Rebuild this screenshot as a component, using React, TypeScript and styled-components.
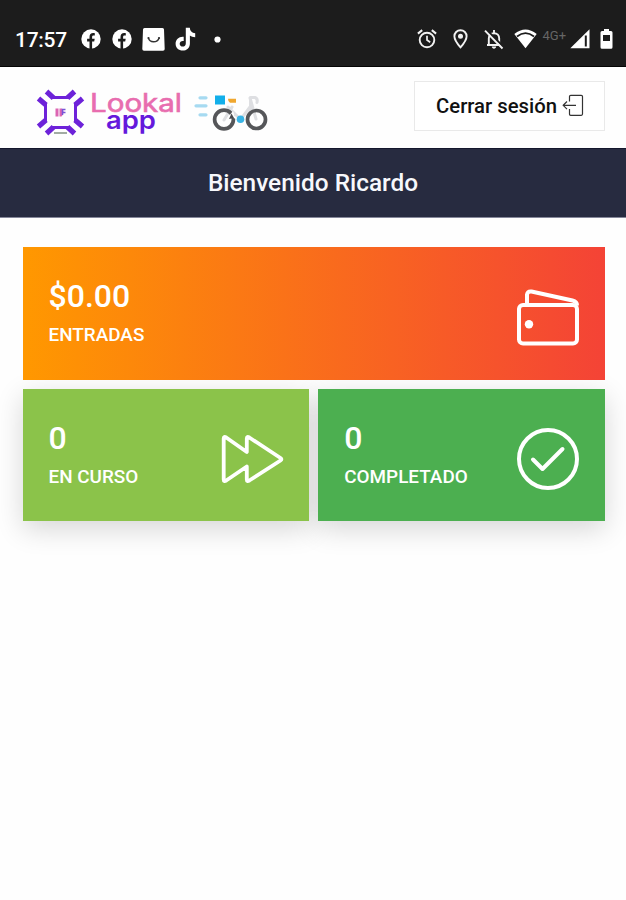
import React from "react";
import styled, { createGlobalStyle } from "styled-components";

const GlobalStyle = createGlobalStyle`
  * { box-sizing: border-box; }
  html, body { margin: 0; background: #fefefe; }
  body { font-family: Roboto, "Liberation Sans", sans-serif; overflow: hidden; }
  svg { display: block; flex: none; }
`;

const Screen = styled.div`
  width: 626px;
  height: 900px;
  background: #fefefe;
  display: flex;
  flex-direction: column;
`;

const StatusBar = styled.div`
  height: 67px;
  flex: none;
  padding: 12px 13.5px 0 15px;
  background: #1c1c1c;
  border-bottom: 1px solid #050505;
  display: flex;
  align-items: center;
  justify-content: space-between;
  color: #fff;
`;

const StatusGroup = styled.div<{ $gap: number }>`
  display: flex;
  align-items: center;
  gap: ${(p) => p.$gap}px;
  height: 24px;
`;

const Clock = styled.span`
  width: 54px;
  font-size: 21px;
  line-height: 24px;
  font-weight: 500;
  letter-spacing: -0.3px;
  padding-top: 2px;
`;

const Network = styled.span`
  width: 25px;
  font-size: 13px;
  line-height: 14px;
  color: #656565;
  margin: -7px -8px 0 -4.5px;
  white-space: nowrap;
`;

const Header = styled.header`
  height: 81px;
  flex: none;
  padding: 14px 21px 0 30px;
  display: flex;
  justify-content: space-between;
  align-items: flex-start;
`;

const LogoutButton = styled.button`
  width: 191px;
  height: 50px;
  padding: 0 0 1px 21px;
  border: 1.5px solid #e9e9e9;
  background: #fff;
  color: #111;
  font: 500 20.3px/24px Roboto, sans-serif;
  display: flex;
  align-items: center;
  gap: 5px;
  white-space: nowrap;
`;

const LogoutLabel = styled.span`
  width: 121px;
  padding-top: 1px;
`;

const Welcome = styled.h1`
  height: 70px;
  flex: none;
  margin: 0;
  background: #272b40;
  border-top: 1px solid #14172c;
  border-bottom: 1px solid #85879a;
  color: #f7f8fc;
  font-size: 24.4px;
  line-height: 67px;
  font-weight: 500;
  text-align: center;
`;

const CardGrid = styled.main`
  isolation: isolate;
  display: grid;
  grid-template-columns: 1fr 1fr;
  grid-template-rows: 132.5px 131.5px;
  gap: 9.5px 9px;
  padding: 29px 21px 0 22.5px;
`;

const Card = styled.section<{ $fill: string; $wide?: boolean }>`
  grid-column: ${(p) => (p.$wide ? "1 / -1" : "auto")};
  position: relative;
  background: ${(p) => p.$fill};
  color: #fff;
  display: flex;
  justify-content: space-between;
  align-items: flex-start;
  padding: ${(p) => (p.$wide ? 30 : 29.5)}px 25px 0 26px;

  /* Keeps each shadow beneath the neighbouring cards. */
  &::before {
    content: "";
    position: absolute;
    inset: 0;
    z-index: -1;
    box-shadow: ${(p) => (p.$wide ? "none" : "0 8px 26px rgba(0, 0, 0, 0.16)")};
  }
`;

const Figures = styled.div`
  display: flex;
  flex-direction: column;
  gap: 7px;
`;

const Value = styled.div`
  font-size: 32px;
  line-height: 38px;
  font-weight: 500;
`;

const Caption = styled.div`
  font-size: 18.9px;
  line-height: 26px;
  font-weight: 500;
`;

const CardIcon = styled.div`
  padding-top: 8px;
`;

const FacebookIcon = () => (
  <svg width="20" height="20" viewBox="0 0 20 20">
    <circle cx="10" cy="10" r="9.7" fill="#fff" />
    <path d="M8.5 20v-7.4H6.1V9.8h2.4V8c0-2.8 1.4-4 3.7-4 .8 0 1.3.1 1.6.2v2.4h-1.2c-1.2 0-1.5.6-1.5 1.6v1.6h2.6l-.5 2.8h-2.1V20z" fill="#1c1c1c" />
  </svg>
);

const BagIcon = () => (
  <svg width="23" height="23" viewBox="0 0 23 23">
    <path d="M2.5 0h18Q22 0 22 1.5L22.7 21q0 1.8-1.7 1.8H2Q.3 22.800.3 21L1 1.500Q1 0 2.500 0z" fill="#fff" />
    <path d="M6.500 10.200C7.500 15 15.500 15 17 10.200" fill="none" stroke="#333" strokeWidth="1.400" strokeLinecap="round" />
    <circle cx="6.500" cy="10" r="1.100" fill="#333" />
    <circle cx="17" cy="10" r="1.100" fill="#333" />
  </svg>
);

const TikTokIcon = () => (
  <svg width="21" height="24" viewBox="0 0 21 24">
    <path d="M10.800.7h4c.2 3.200 2 5.100 5.400 5.500v4c-2.100 0-3.900-.7-5.300-1.700v7.900c0 4.500-3.200 7.200-7.200 7.200-4 0-7.100-3-7.100-6.900 0-4.300 3.500-7.400 8.100-6.900v4.200c-2.200-.5-4 .7-4 2.700 0 1.700 1.300 2.900 3 2.900 1.900 0 3.100-1.200 3.100-3.400z" fill="#fff" />
  </svg>
);

const MoreDot = () => (
  <svg width="7" height="7" viewBox="0 0 7 7">
    <circle cx="3.500" cy="3.500" r="3.100" fill="#fff" />
  </svg>
);

const AlarmIcon = () => (
  <svg width="20" height="20" viewBox="0 0 20 20" fill="none" stroke="#f2f2f2">
    <circle cx="10" cy="11" r="7.300" strokeWidth="1.900" />
    <path d="M10 6.700V11l3.200 2.300" strokeWidth="1.700" />
    <path d="M.9 4.600 5.200 1.100M19.100 4.600 14.800 1.100" strokeWidth="2" />
  </svg>
);

const PinIcon = () => (
  <svg width="15" height="20" viewBox="0 0 15 20">
    <path d="M7.500 1.200C4 1.200 1.400 3.900 1.400 7.300c0 4.300 6.100 11 6.100 11s6.100-6.700 6.100-11c0-3.400-2.600-6.100-6.100-6.100z" fill="none" stroke="#f2f2f2" strokeWidth="1.900" />
    <circle cx="7.500" cy="7.300" r="2.500" fill="#f2f2f2" />
  </svg>
);

const BellOffIcon = () => (
  <svg width="20" height="21" viewBox="0 0 20 21">
    <path d="M3 16h14M4.800 16V9.500c0-3 2-5.300 5.200-5.300s5.200 2.300 5.200 5.300V16M10 1v3" fill="none" stroke="#f2f2f2" strokeWidth="1.900" />
    <path d="M7.800 17.600h4.400c0 2.800-4.400 2.800-4.400 0z" fill="#f2f2f2" />
    <path d="M2.500.7 20 18.500" stroke="#1c1c1c" strokeWidth="2" />
    <path d="M1 1.700 18.500 19.500" stroke="#f2f2f2" strokeWidth="1.900" />
  </svg>
);

const WifiIcon = () => (
  <svg width="23" height="20" viewBox="0 0 23 20">
    <path d="M.3 5Q11.500-4 22.700 5L11.500 19.300z" fill="#fff" />
    <path d="M3 7.500Q11.500.8 20 7.500" fill="none" stroke="#1c1c1c" strokeWidth="1.800" />
  </svg>
);

const SignalIcon = () => (
  <svg width="20" height="20" viewBox="0 0 20 20">
    <path d="M19.500.3v19H.3z" fill="#fff" />
    <path d="M15.800 6.500v11" stroke="#1c1c1c" strokeWidth="2" />
  </svg>
);

const BatteryIcon = () => (
  <svg width="13" height="20" viewBox="0 0 13 20">
    <path d="M4 0h5v2h2q1.500 0 1.500 1.500v14.800q0 1.500-1.500 1.500H2q-1.500 0-1.500-1.500V3.500Q.5 2 2 2h2z" fill="#fff" />
    <path d="M3 6h7v6H3z" fill="#1c1c1c" />
  </svg>
);

const BrandLogo = () => (
  <svg width="244" height="60" viewBox="30 81 244 60" fill="none">
    {/* hexagonal badge with its corner brackets */}
    <g stroke="#6d22d9" strokeLinejoin="round">
      <path d="M52 97.500H69M52 127.500H69M45.500 103.500V121.500M75.500 103.500V121.500" strokeWidth="3" />
      <path d="M46.500 91.500 53.500 98M74.500 91.500 67.500 98M46.500 133.500 53.500 127M74.500 133.500 67.500 127M38.500 98.500 46 105M82.500 98.500 75 105M38.500 126.500 46 120M82.500 126.500 75 120" strokeWidth="5.200" />
    </g>
    <path d="M55.500 108.500h3v8h-3zM59.500 108.500h2.500q3 4-.5 8h-2z" fill="#dc65b2" />
    <path d="M62.500 115V109.500h3M62.500 112.500h3" stroke="#7656d8" strokeWidth="1.500" />
    <path d="M54 133h13" stroke="#647567" strokeWidth="1.200" />
    {/* word mark */}
    <text x="90" y="112" fill="#e86daf" stroke="#e86daf" strokeWidth=".6" fontFamily="Inter, sans-serif" fontSize="25" textLength="92" lengthAdjust="spacingAndGlyphs">Lookal</text>
    <text x="106" y="128.500" fill="#6519dc" fontFamily="Inter, sans-serif" fontWeight="600" fontSize="25" textLength="50" lengthAdjust="spacingAndGlyphs">app</text>
    {/* speed lines */}
    <g stroke="#a6daf1" strokeWidth="3.200" strokeLinecap="round">
      <path d="M200 97.800h6M196 105.800h10M200 114.800h6" />
    </g>
    {/* delivery bicycle */}
    <g stroke="#dedfe2" strokeWidth="3" strokeLinecap="round" strokeLinejoin="round">
      <path d="M228 107 240 119M250 107 241 119M250 98 256 119M224 120 232 107" />
      <path d="M250.500 113V97.500h4.500q3 1 2 5" />
    </g>
    <circle cx="224" cy="119.500" r="9.400" stroke="#555659" strokeWidth="3.700" />
    <circle cx="256.500" cy="119.500" r="9" stroke="#555659" strokeWidth="3.700" />
    <path d="M233 111 236 119 229 116z" fill="#fefefe" />
    <path d="M229 119 231.500 113.500 234 118z" fill="#49494d" />
    <circle cx="240.500" cy="119.300" r="3.800" fill="#39b4e5" />
    <path d="M215 95.500h10v9h-10z" fill="#12afea" />
    <path d="M228 98.800h8v4h-6q-2-1-2-4z" fill="#f0a72f" />
  </svg>
);

const ExitIcon = () => (
  <svg width="22" height="23" viewBox="0 0 22 23" fill="none" stroke="#333" strokeWidth="1.200">
    <path d="M7.500 7.500V2.500q0-1.200 1.200-1.200h10.600q1.200 0 1.200 1.200v17.600q0 1.200-1.200 1.200H8.700q-1.200 0-1.200-1.200v-5M14 11.300H1.200M5 7.500 1.200 11.300 5 15.100" />
  </svg>
);

const WalletIcon = () => (
  <svg width="64" height="64" viewBox="0 0 64 64" fill="none" stroke="#fff" strokeWidth="4" strokeLinejoin="round">
    <rect x="3" y="20" width="58" height="38.500" rx="4" />
    <path d="M11 20V9.500q.6-3.500 4.500-3L56.500 15.500q4.500 1 4.500 5" />
    <circle cx="13" cy="39.300" r="4.200" fill="#fff" stroke="none" />
  </svg>
);

const ForwardIcon = () => (
  <svg width="64" height="64" viewBox="0 0 64 64" fill="none" stroke="#fff" strokeWidth="3.800" strokeLinejoin="round">
    <path d="M3.700 11.500q0-2.500 2.500-1L26.800 25V11.500q0-2.500 2.500-1L60.500 31q1.800 1.300 0 2.500L29.300 53.500q-2.500 1.500-2.500-1V39.500L6.200 53.500q-2.500 1.500-2.500-1z" />
  </svg>
);

const CheckIcon = () => (
  <svg width="64" height="64" viewBox="0 0 64 64" fill="none" stroke="#fff" strokeWidth="4" strokeLinecap="round" strokeLinejoin="round">
    <circle cx="32" cy="32" r="29" />
    <path d="M17 32.500 26.500 42 46.500 22" />
  </svg>
);

type StatCardProps = {
  value: string;
  caption: string;
  fill: string;
  icon: React.ReactNode;
  wide?: boolean;
};

const StatCard = ({ value, caption, fill, icon, wide }: StatCardProps) => (
  <Card $fill={fill} $wide={wide}>
    <Figures>
      <Value>{value}</Value>
      <Caption>{caption}</Caption>
    </Figures>
    <CardIcon>{icon}</CardIcon>
  </Card>
);

export default function App() {
  return (
    <>
      <GlobalStyle />
      <Screen>
        <StatusBar>
          <StatusGroup $gap={11.5}>
            <Clock>17:57</Clock>
            <FacebookIcon />
            <StatusGroup $gap={10}>
              <FacebookIcon />
              <BagIcon />
              <TikTokIcon />
            </StatusGroup>
            <StatusGroup $gap={6.5}>
              <span />
              <MoreDot />
            </StatusGroup>
          </StatusGroup>
          <StatusGroup $gap={10}>
            <StatusGroup $gap={16}>
              <AlarmIcon />
              <PinIcon />
              <BellOffIcon />
            </StatusGroup>
            <WifiIcon />
            <Network>4G+</Network>
            <SignalIcon />
            <BatteryIcon />
          </StatusGroup>
        </StatusBar>
        <Header>
          <BrandLogo />
          <LogoutButton>
            <LogoutLabel>Cerrar sesión</LogoutLabel>
            <ExitIcon />
          </LogoutButton>
        </Header>
        <Welcome>Bienvenido Ricardo</Welcome>
        <CardGrid>
          <StatCard wide value="$0.00" caption="ENTRADAS" fill="linear-gradient(90deg, #ff9800 0%, #f44336 100%)" icon={<WalletIcon />} />
          <StatCard value="0" caption="EN CURSO" fill="#8bc34a" icon={<ForwardIcon />} />
          <StatCard value="0" caption="COMPLETADO" fill="#4caf50" icon={<CheckIcon />} />
        </CardGrid>
      </Screen>
    </>
  );
}
